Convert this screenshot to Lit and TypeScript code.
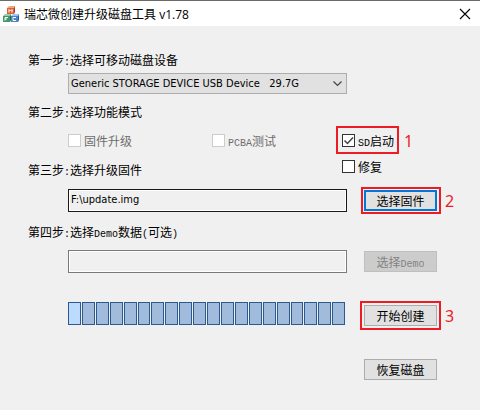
import { LitElement, html, css, svg } from "lit";
import { customElement, state } from "lit/decorators.js";

const block = (x: number, y: number, face: string, top: string, side: string, mark: string) => svg`
  <path d="M${x} ${y + 2}l2-2h6l-1 2z" fill=${top} />
  <path d="M${x + 7} ${y + 2}l1-2v6l-1 2z" fill=${side} />
  <rect x=${x} y=${y + 2} width="7" height="6" fill=${face} />
  <path d=${`M${x + 2} ${y + 6.5}${mark}`} fill="none" stroke="#fff" stroke-width="1" />`;

@customElement("app-root")
export class AppRoot extends LitElement {
  static styles = css`
    :host {
      display: block;
      min-height: 100vh;
      background: #f0f0f0;
      color: #000;
      font: 12px/16px "Liberation Sans", "Noto Sans CJK SC", sans-serif;
    }
    * {
      box-sizing: border-box;
    }
    .titlebar {
      display: flex;
      align-items: center;
      height: 26px;
      padding: 0 9px 0 3px;
      background: #fff;
      border-top: 1px solid #6b6b6b;
    }
    .logo {
      width: 16px;
      height: 16px;
      margin-right: 5px;
    }
    h1 {
      flex: 1;
      margin: 0;
      font: 12px/16px "Noto Sans CJK SC", sans-serif;
    }
    .version {
      font-family: "Open Sans", sans-serif;
      line-height: 0;
    }
    .close {
      display: flex;
      padding: 0;
      border: 0;
      background: none;
    }
    main {
      padding: 26px 43px 30px 28px;
    }
    h2 {
      margin: 0;
      font: 12px/16px "Noto Sans CJK SC", sans-serif;
    }
    .mono {
      font-family: "Liberation Mono", monospace;
      font-size: 10px;
      line-height: 0;
    }
    .row {
      display: flex;
      gap: 17px;
      margin-left: 40px;
    }
    .device {
      position: relative;
      margin: 5px 90px 10px 40px;
    }
    select {
      display: block;
      width: 100%;
      height: 21px;
      padding: 0 20px 0 2px;
      appearance: none;
      border: 1px solid #adadad;
      border-radius: 0;
      background: #e1e1e1;
      color: #000;
      font: 11px/16px "DejaVu Sans Condensed", sans-serif;
    }
    .arrow {
      position: absolute;
      right: 4px;
      top: 7px;
      pointer-events: none;
    }
    .modes {
      display: grid;
      grid-template-columns: 144fr 130fr 95fr;
      margin: 12px 0 9px 40px;
    }
    .check {
      position: relative;
      display: flex;
      align-items: center;
      gap: 3px;
      height: 17px;
      justify-self: start;
      font-family: "Noto Sans CJK SC", sans-serif;
      white-space: nowrap;
    }
    .check.off {
      color: #6d6d6d;
    }
    .check input {
      display: block;
      width: 13px;
      height: 13px;
      margin: 0;
      appearance: none;
      border: 1px solid #333;
      background: #fff;
    }
    .check input:disabled {
      border-color: #ccc;
    }
    .tick {
      position: absolute;
      left: 0;
      top: 2px;
      pointer-events: none;
    }
    .step3 {
      display: grid;
      grid-template-columns: 314fr 95fr;
      height: 20px;
      margin-bottom: 11px;
    }
    .step3 h2 {
      align-self: end;
    }
    .path {
      flex: 1;
      min-width: 0;
      height: 23px;
      padding: 0 2px 2px;
      border: 1px solid #1a1a1a;
      border-radius: 0;
      box-shadow: inset 0 0 0 1px #fff;
      background: #f0f0f0;
      color: #000;
      font: 11px/16px "DejaVu Sans Condensed", sans-serif;
    }
    .path:disabled {
      border-color: #7a7a7a;
    }
    .action {
      position: relative;
      width: 73px;
      align-self: center;
    }
    .action button {
      display: block;
      width: 100%;
      height: 21px;
      padding: 0;
      border: 1px solid #adadad;
      border-radius: 0;
      background: #e1e1e1;
      color: #000;
      font: 12px/16px "Noto Sans CJK SC", sans-serif;
    }
    .action button.primary {
      border: 2px solid #0078d7;
    }
    .action button:disabled {
      border-color: #bfbfbf;
      background: #ccc;
      color: #838383;
    }
    .mark {
      position: absolute;
      inset: -4px;
      border: 2px solid #ed1c24;
      pointer-events: none;
    }
    .mark.slim {
      inset: -3px -4px -3px -3px;
    }
    .check .mark {
      inset: -6px -5px -5px -6px;
    }
    .num {
      position: absolute;
      left: 100%;
      top: 50%;
      margin: -10px 0 0 8px;
      color: #ed1c24;
      font: 16px/20px "Noto Sans", sans-serif;
    }
    .check .num {
      margin-left: 10px;
    }
    .step4 {
      margin: 12px 0 10px;
    }
    .run {
      margin-top: 29px;
      height: 24px;
    }
    .run .action {
      align-self: end;
    }
    .progress {
      flex: 1;
      display: flex;
      gap: 1px;
      height: 23px;
      padding-right: 2px;
    }
    .cell {
      flex: 1;
      border: 1px solid #2d5a8e;
      background: #a0bbdb;
    }
    .cell.lit {
      background: #bddbff;
    }
    .restore {
      justify-content: flex-end;
      margin-top: 33px;
    }
  `;

  @state() private cells = Array.from({ length: 20 }, (_, i) => i === 0);

  render() {
    return html`
      <header class="titlebar">
        <svg class="logo" viewBox="0 0 16 16" aria-hidden="true">
          ${block(4, 0, "#dc6338", "#f2a77e", "#a83a1c", "v-3l1.5 1.500l1.500-1.500v3")}
          ${block(0, 8, "#3f9a68", "#8fd0a4", "#216b43", "v-3h3m-3 1.500h2")}
          ${block(8, 8, "#4b83c4", "#9fc5ec", "#285a98", "m3-3h-3v3h3")}
        </svg>
        <h1>瑞芯微创建升级磁盘工具<span class="version"> v1.78</span></h1>
        <button class="close" aria-label="关闭">
          <svg width="12" height="12" viewBox="0 0 12 12">
            <path d="M1 1l10 10M11 1l-10 10" stroke="#000" stroke-width="1.100" />
          </svg>
        </button>
      </header>
      <main>
        <h2><label for="device">第一步<span class="mono">:</span>选择可移动磁盘设备</label></h2>
        <div class="device">
          <select id="device">
            <option>Generic STORAGE DEVICE USB Device\u00a0\u00a0\u00a029.7G</option>
          </select>
          <svg class="arrow" width="11" height="7" viewBox="0 0 11 7">
            <path d="M1.500 1.500l4 4l4-4" fill="none" stroke="#444" stroke-width="1.200" />
          </svg>
        </div>
        <h2>第二步<span class="mono">:</span>选择功能模式</h2>
        <div class="modes">
          <label class="check off"><input type="checkbox" disabled /><span>固件升级</span></label>
          <label class="check off">
            <input type="checkbox" disabled /><span><span class="mono">PCBA</span>测试</span>
          </label>
          <label class="check">
            <input type="checkbox" checked /><span><span class="mono">SD</span>启动</span>
            <svg class="tick" width="13" height="13" viewBox="0 0 13 13">
              <path d="M2.500 6.500l3 3l5.500-6" fill="none" stroke="#444" stroke-width="1.500" />
            </svg>
            <span class="mark"></span><span class="num">1</span>
          </label>
        </div>
        <div class="step3">
          <h2><label for="firmware">第三步<span class="mono">:</span>选择升级固件</label></h2>
          <label class="check"><input type="checkbox" /><span>修复</span></label>
        </div>
        <div class="row">
          <input class="path" id="firmware" type="text" value="F:\\update.img" />
          <div class="action">
            <button class="primary">选择固件</button>
            <span class="mark slim"></span><span class="num">2</span>
          </div>
        </div>
        <h2 class="step4">
          <label for="demo">第四步<span class="mono">:</span>选择<span class="mono">Demo</span>数据<span class="mono">(</span>可选<span class="mono">)</span></label>
        </h2>
        <div class="row">
          <input class="path" id="demo" type="text" disabled />
          <div class="action">
            <button disabled>选择<span class="mono">Demo</span></button>
          </div>
        </div>
        <div class="row run">
          <div class="progress" role="progressbar" aria-label="进度">
            ${this.cells.map((lit) => html`<span class="cell ${lit ? "lit" : ""}"></span>`)}
          </div>
          <div class="action">
            <button>开始创建</button>
            <span class="mark"></span><span class="num">3</span>
          </div>
        </div>
        <div class="row restore">
          <div class="action"><button>恢复磁盘</button></div>
        </div>
      </main>
    `;
  }
}
